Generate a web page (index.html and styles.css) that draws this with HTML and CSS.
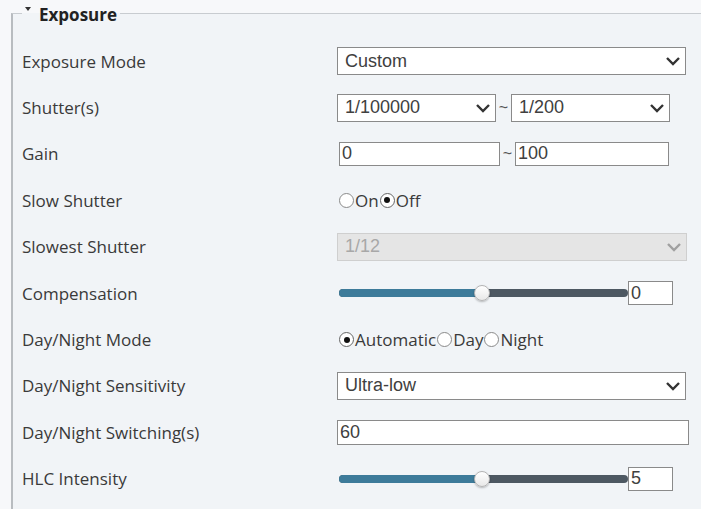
FILE: index.html
```html
<!DOCTYPE html>
<html lang="en">
<head>
    <meta charset="UTF-8">
    <meta name="viewport" content="width=device-width, initial-scale=1.0">
    <title>Exposure</title>
    <link rel="stylesheet" href="styles.css">
</head>
<body>

    <fieldset class="panel">
        <legend class="panel-title"><span class="caret"></span>Exposure</legend>

        <div class="form">
            <div class="row">
                <span class="label">Exposure Mode</span>
                <div class="select wide">
                    <span>Custom</span>
                    <svg class="chev" viewBox="0 0 16 10"><polyline points="2,2 8,8 14,2"/></svg>
                </div>
            </div>

            <div class="row">
                <span class="label">Shutter(s)</span>
                <div class="pair">
                    <div class="select half">
                        <span>1/100000</span>
                        <svg class="chev" viewBox="0 0 16 10"><polyline points="2,2 8,8 14,2"/></svg>
                    </div>
                    <span class="tilde">~</span>
                    <div class="select half">
                        <span>1/200</span>
                        <svg class="chev" viewBox="0 0 16 10"><polyline points="2,2 8,8 14,2"/></svg>
                    </div>
                </div>
            </div>

            <div class="row">
                <span class="label">Gain</span>
                <div class="pair">
                    <input class="text gain-from" type="text" value="0">
                    <span class="tilde">~</span>
                    <input class="text gain-to" type="text" value="100">
                </div>
            </div>

            <div class="row">
                <span class="label">Slow Shutter</span>
                <div class="radios">
                    <span class="radio"></span>On<span class="radio checked"></span>Off
                </div>
            </div>

            <div class="row">
                <span class="label">Slowest Shutter</span>
                <div class="select wide disabled">
                    <span>1/12</span>
                    <svg class="chev" viewBox="0 0 16 10"><polyline points="2,2 8,8 14,2"/></svg>
                </div>
            </div>

            <div class="row">
                <span class="label">Compensation</span>
                <div class="slider">
                    <div class="track">
                        <div class="fill" style="width: 143px"></div>
                        <div class="thumb" style="left: 135px"></div>
                    </div>
                    <input class="text num" type="text" value="0">
                </div>
            </div>

            <div class="row">
                <span class="label">Day/Night Mode</span>
                <div class="radios">
                    <span class="radio checked"></span>Automatic<span class="radio"></span>Day<span class="radio"></span>Night
                </div>
            </div>

            <div class="row">
                <span class="label">Day/Night Sensitivity</span>
                <div class="select wide">
                    <span>Ultra-low</span>
                    <svg class="chev" viewBox="0 0 16 10"><polyline points="2,2 8,8 14,2"/></svg>
                </div>
            </div>

            <div class="row">
                <span class="label">Day/Night Switching(s)</span>
                <input class="text long" type="text" value="60">
            </div>

            <div class="row">
                <span class="label">HLC Intensity</span>
                <div class="slider">
                    <div class="track">
                        <div class="fill" style="width: 143px"></div>
                        <div class="thumb" style="left: 135px"></div>
                    </div>
                    <input class="text num" type="text" value="5">
                </div>
            </div>
        </div>
    </fieldset>

</body>
</html>
```

FILE: styles.css
```css
body {
    margin: 0;
    height: 509px;
    background-color: #f7f8fa;
    font-family: "Open Sans", Arial, sans-serif;
    color: #3a3a3a;
    overflow: hidden;
}

.panel {
    box-sizing: border-box;
    height: 509px;
    margin: 0 0 0 11px;
    padding: 0 0 0 9px;
    border: 1px solid #c8ccd0;
    border-left: 2px solid #b8bcc0;
    border-right: 0;
    border-bottom: 0;
    background-color: #f1f4f7;
    min-width: 0;
}

.panel-title {
    display: flex;
    align-items: flex-start;
    padding: 4px 3px 0 3px;
    font-size: 17px;
    font-weight: bold;
    line-height: 22px;
    color: #222;
}

.caret {
    width: 0;
    height: 0;
    margin-top: 3px;
    margin-right: 8px;
    border-left: 3.5px solid transparent;
    border-right: 3.5px solid transparent;
    border-top: 4px solid #333;
}

.form {
    margin-top: 12px;
}

.row {
    display: grid;
    grid-template-columns: 315px auto;
    align-items: center;
    height: 46.4px;
}

.label {
    font-size: 17px;
}

/* select boxes */
.select {
    box-sizing: border-box;
    height: 28px;
    display: flex;
    align-items: center;
    justify-content: space-between;
    padding: 0 4px 0 7px;
    border: 1px solid #8a8a8a;
    background-color: #fff;
    font-family: "Liberation Sans", Arial, sans-serif;
    font-size: 18px;
    color: #404040;
}

.select.wide {
    width: 349px;
}

.select.half {
    width: 159px;
}

.select.disabled {
    width: 350px;
    background-color: #e5e5e5;
    border-color: #cfcfcf;
    color: #a8a8a8;
}

.chev {
    width: 16px;
    height: 10px;
    fill: none;
    stroke: #333;
    stroke-width: 2.4;
}

.disabled .chev {
    stroke: #a0a0a0;
}

.pair {
    display: flex;
    align-items: center;
}

.tilde {
    width: 15px;
    text-align: center;
    font-family: "Liberation Sans", Arial, sans-serif;
    font-size: 16px;
    color: #555;
}

/* text inputs */
.text {
    box-sizing: border-box;
    height: 25px;
    margin: 0;
    padding: 0 2px;
    border: 1px solid #8a8a8a;
    border-radius: 0;
    background-color: #fff;
    font-family: "Liberation Sans", Arial, sans-serif;
    font-size: 18px;
    color: #404040;
    outline: none;
}

.gain-from {
    width: 161px;
    margin-left: 2px;
    height: 24px;
}

.gain-to {
    width: 154px;
    height: 24px;
}

.long {
    width: 352px;
}

.num {
    width: 45px;
    height: 24px;
}

/* radios */
.radios {
    display: flex;
    align-items: center;
    font-size: 17px;
    padding-left: 1px;
}

.radio {
    box-sizing: border-box;
    width: 15px;
    height: 15px;
    margin: 0 1px;
    border: 1px solid #8a8a8a;
    border-radius: 50%;
    background-color: #fff;
    display: flex;
    align-items: center;
    justify-content: center;
}

.radio.checked {
    border-color: #666;
}

.radio.checked::after {
    content: "";
    width: 6px;
    height: 6px;
    border-radius: 50%;
    background-color: #111;
}

/* sliders */
.slider {
    display: flex;
    align-items: center;
    padding-left: 2px;
}

.track {
    position: relative;
    width: 289px;
    height: 8px;
    border-radius: 4px;
    background-color: #4d5862;
}

.fill {
    height: 8px;
    border-radius: 4px 0 0 4px;
    background-color: #3d7b9a;
}

.thumb {
    position: absolute;
    top: -4px;
    box-sizing: border-box;
    width: 16px;
    height: 16px;
    border: 1px solid #b4b4b4;
    border-radius: 50%;
    background: linear-gradient(#ffffff, #e8e8e8);
    box-shadow: 0 1px 2px rgba(0, 0, 0, 0.25);
}
```
